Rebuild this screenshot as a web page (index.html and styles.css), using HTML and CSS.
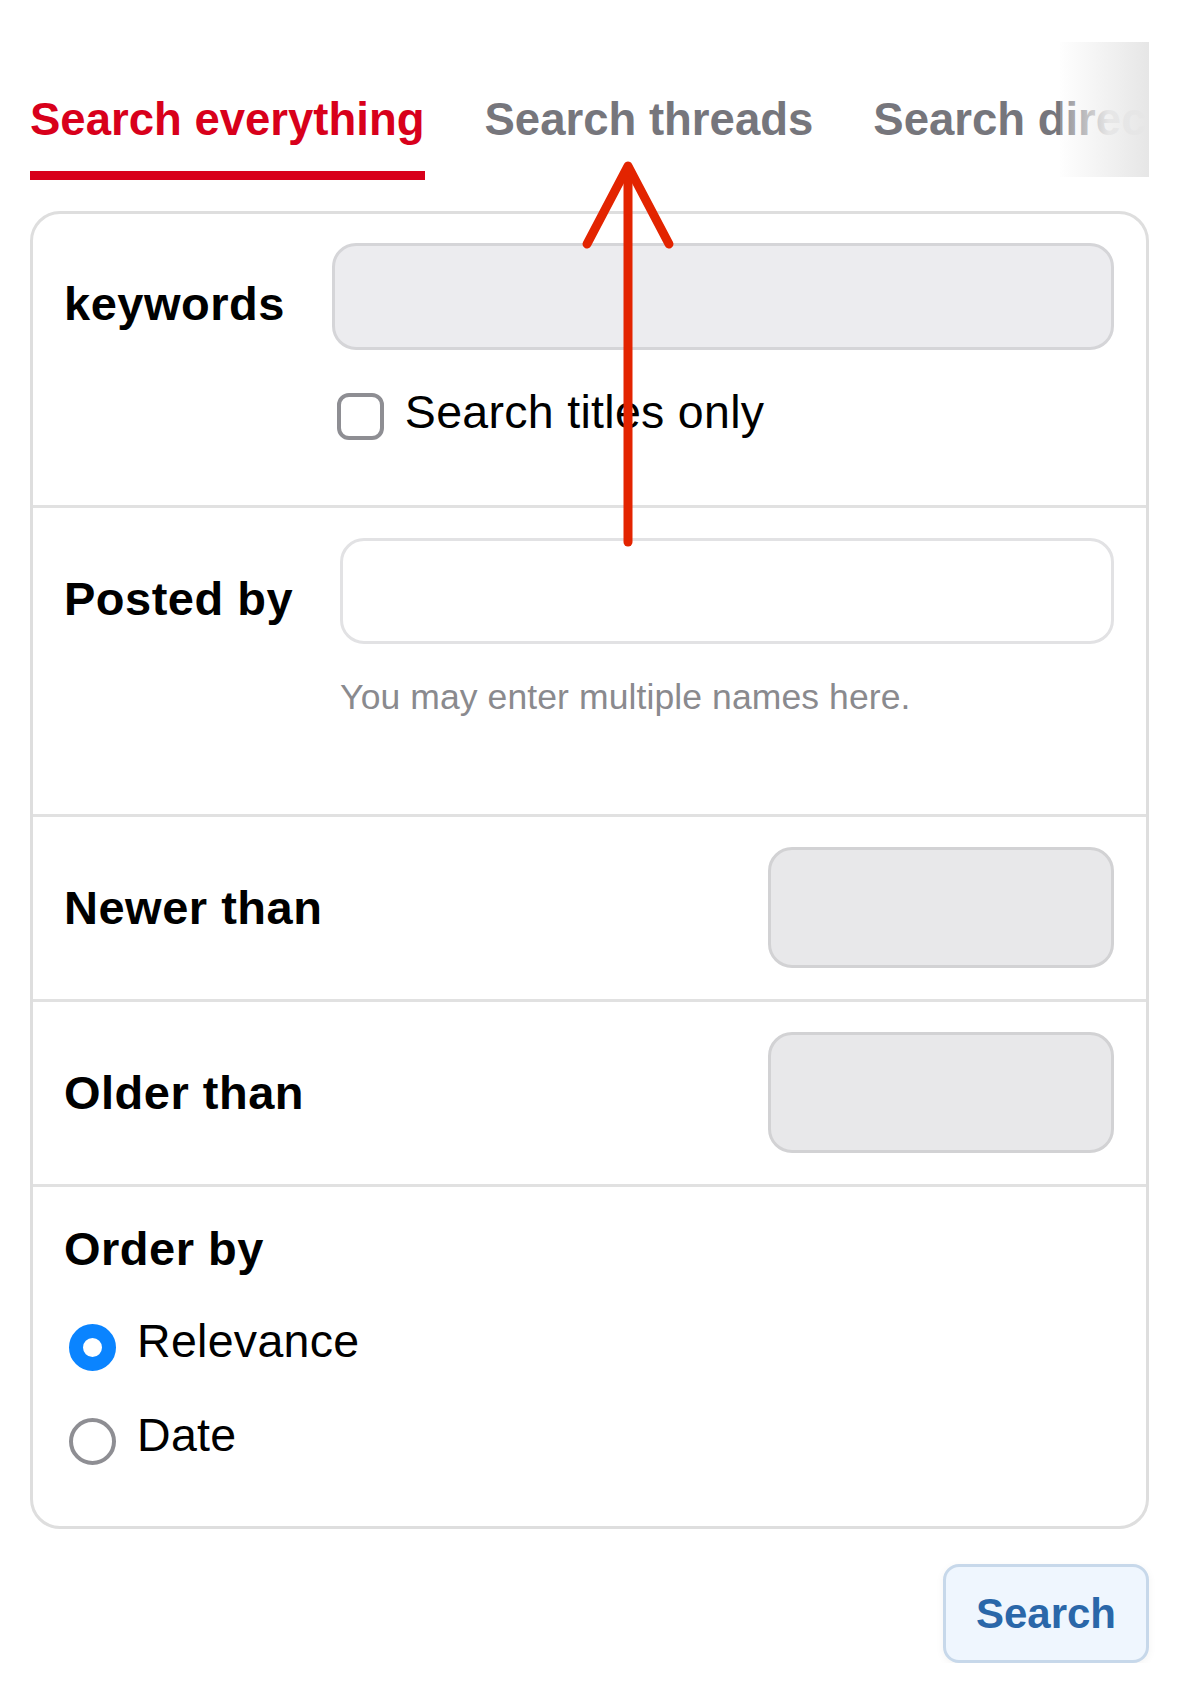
FILE: index.html
```html
<!DOCTYPE html>
<html lang="en">
<head>
  <meta charset="UTF-8">
  <meta name="viewport" content="width=device-width, initial-scale=1.0">
  <title>Search</title>
  <link rel="stylesheet" href="styles.css">
</head>
<body>
  <div class="page">
    <div class="tabs">
      <a class="tab active">Search everything</a>
      <a class="tab">Search threads</a>
      <a class="tab">Search directory</a>
      <div class="fade"></div>
    </div>

    <form class="card">
      <div class="row row-kw">
        <label class="label">keywords</label>
        <div class="field">
          <input type="text" class="input input-gray">
          <label class="option option-check">
            <input type="checkbox" class="check">
            <span>Search titles only</span>
          </label>
        </div>
      </div>

      <div class="row row-posted">
        <label class="label">Posted by</label>
        <div class="field">
          <input type="text" class="input input-white">
          <p class="hint">You may enter multiple names here.</p>
        </div>
      </div>

      <div class="row row-date">
        <label class="label">Newer than</label>
        <input type="text" class="date-box">
      </div>

      <div class="row row-date">
        <label class="label">Older than</label>
        <input type="text" class="date-box">
      </div>

      <div class="row row-order">
        <label class="label">Order by</label>
        <label class="option option-first">
          <input type="radio" name="order" class="radio" checked>
          <span>Relevance</span>
        </label>
        <label class="option option-next">
          <input type="radio" name="order" class="radio">
          <span>Date</span>
        </label>
      </div>
    </form>

    <div class="actions">
      <button type="submit" class="btn">Search</button>
    </div>

    <!-- annotation arrow drawn over the screenshot -->
    <svg class="arrow" width="1179" height="600" viewBox="0 0 1179 600">
      <g fill="none" stroke="#e32400" stroke-width="9" stroke-linecap="round" stroke-linejoin="round">
        <path d="M628 168 L628 542"/>
        <path d="M587 244 L628 166 L669 244"/>
      </g>
    </svg>
  </div>
</body>
</html>
```

FILE: styles.css
```css
* {
  box-sizing: border-box;
  margin: 0;
  padding: 0;
}
body {
  background-color: #fff;
  font-family: "Liberation Sans", Arial, sans-serif;
  color: #000;
}
.page {
  position: relative;
  padding: 42px 30px 0 30px;
}

/* tabs */
.tabs {
  position: relative;
  display: flex;
  gap: 60px;
  overflow: hidden;
  white-space: nowrap;
}
.tab {
  flex-shrink: 0;
  padding: 51px 0 25px;
  border-bottom: 9px solid transparent;
  font-size: 45.5px;
  font-weight: bold;
  line-height: 53px;
  color: #76767c;
}
.tab.active {
  color: #d8001b;
  border-bottom-color: #d8001b;
}
.fade {
  position: absolute;
  top: 0;
  right: 0;
  bottom: 3px;
  width: 89px;
  background: linear-gradient(to right, rgba(250, 250, 250, 0.2), rgba(240, 240, 240, 0.92) 55%, #e6e6e6);
}

/* card */
.card {
  margin-top: 31px;
  border: 3px solid #dedede;
  border-radius: 30px;
  background-color: #fff;
}
.row {
  border-top: 3px solid #e1e1e1;
  padding: 30px 32px 31px 31px;
}
.row:first-child {
  border-top: none;
}
.label {
  flex-shrink: 0;
  font-size: 47px;
  font-weight: bold;
  line-height: 54px;
  letter-spacing: 0.5px;
}
.field {
  flex: 1;
}

.row-kw, .row-posted {
  display: flex;
  gap: 47px;
}
.row-kw {
  padding-top: 29px;
  padding-bottom: 65px;
}
.row-posted {
  padding-bottom: 96px;
}
.row-kw .label, .row-posted .label {
  margin-top: 34px;
}

.input {
  display: block;
  width: 100%;
  border-radius: 24px;
  font-size: 40px;
  outline: none;
}
.input-gray {
  height: 107px;
  border: 3px solid #d5d5d8;
  background-color: #ececef;
}
.input-white {
  height: 106px;
  border: 3px solid #e2e2e4;
  background-color: #fff;
}
.hint {
  margin-top: 33px;
  font-size: 35.5px;
  line-height: 41px;
  letter-spacing: 0.1px;
  color: #8a8a8e;
}

/* checkbox + radio options */
.option {
  display: flex;
  align-items: flex-start;
  gap: 21px;
  font-size: 46.5px;
  line-height: 53px;
  letter-spacing: 0.3px;
}
.option-check {
  margin-top: 36px;
}
.check, .radio {
  -webkit-appearance: none;
  appearance: none;
  flex-shrink: 0;
  width: 47px;
  height: 47px;
  margin: 9px 0 0 5px;
  border: 4px solid #8e8e93;
  background-color: #fff;
}
.check {
  margin-top: 7px;
  border-radius: 12px;
}
.radio {
  border-radius: 50%;
}
.radio:checked {
  border: 14px solid #0a84ff;
}

.row-date {
  display: flex;
  justify-content: space-between;
  align-items: center;
}
.date-box {
  width: 346px;
  height: 121px;
  border: 3px solid #d2d2d4;
  border-radius: 24px;
  background-color: #e8e8ea;
  outline: none;
}

.row-order {
  padding-top: 35px;
  padding-bottom: 61px;
}
.option-first {
  margin-top: 39px;
}
.option-next {
  margin-top: 38px;
}

/* button */
.actions {
  display: flex;
  justify-content: flex-end;
  margin-top: 35px;
}
.btn {
  height: 99px;
  padding: 0 30px;
  border: 3px solid #c7d8ea;
  border-radius: 16px;
  background-color: #eff6fe;
  box-shadow: 0 2px 8px rgba(0, 0, 0, 0.05);
  font-family: inherit;
  font-size: 42px;
  font-weight: bold;
  color: #2a67a9;
  cursor: pointer;
}

.arrow {
  position: absolute;
  top: 0;
  left: 0;
  pointer-events: none;
}
```
